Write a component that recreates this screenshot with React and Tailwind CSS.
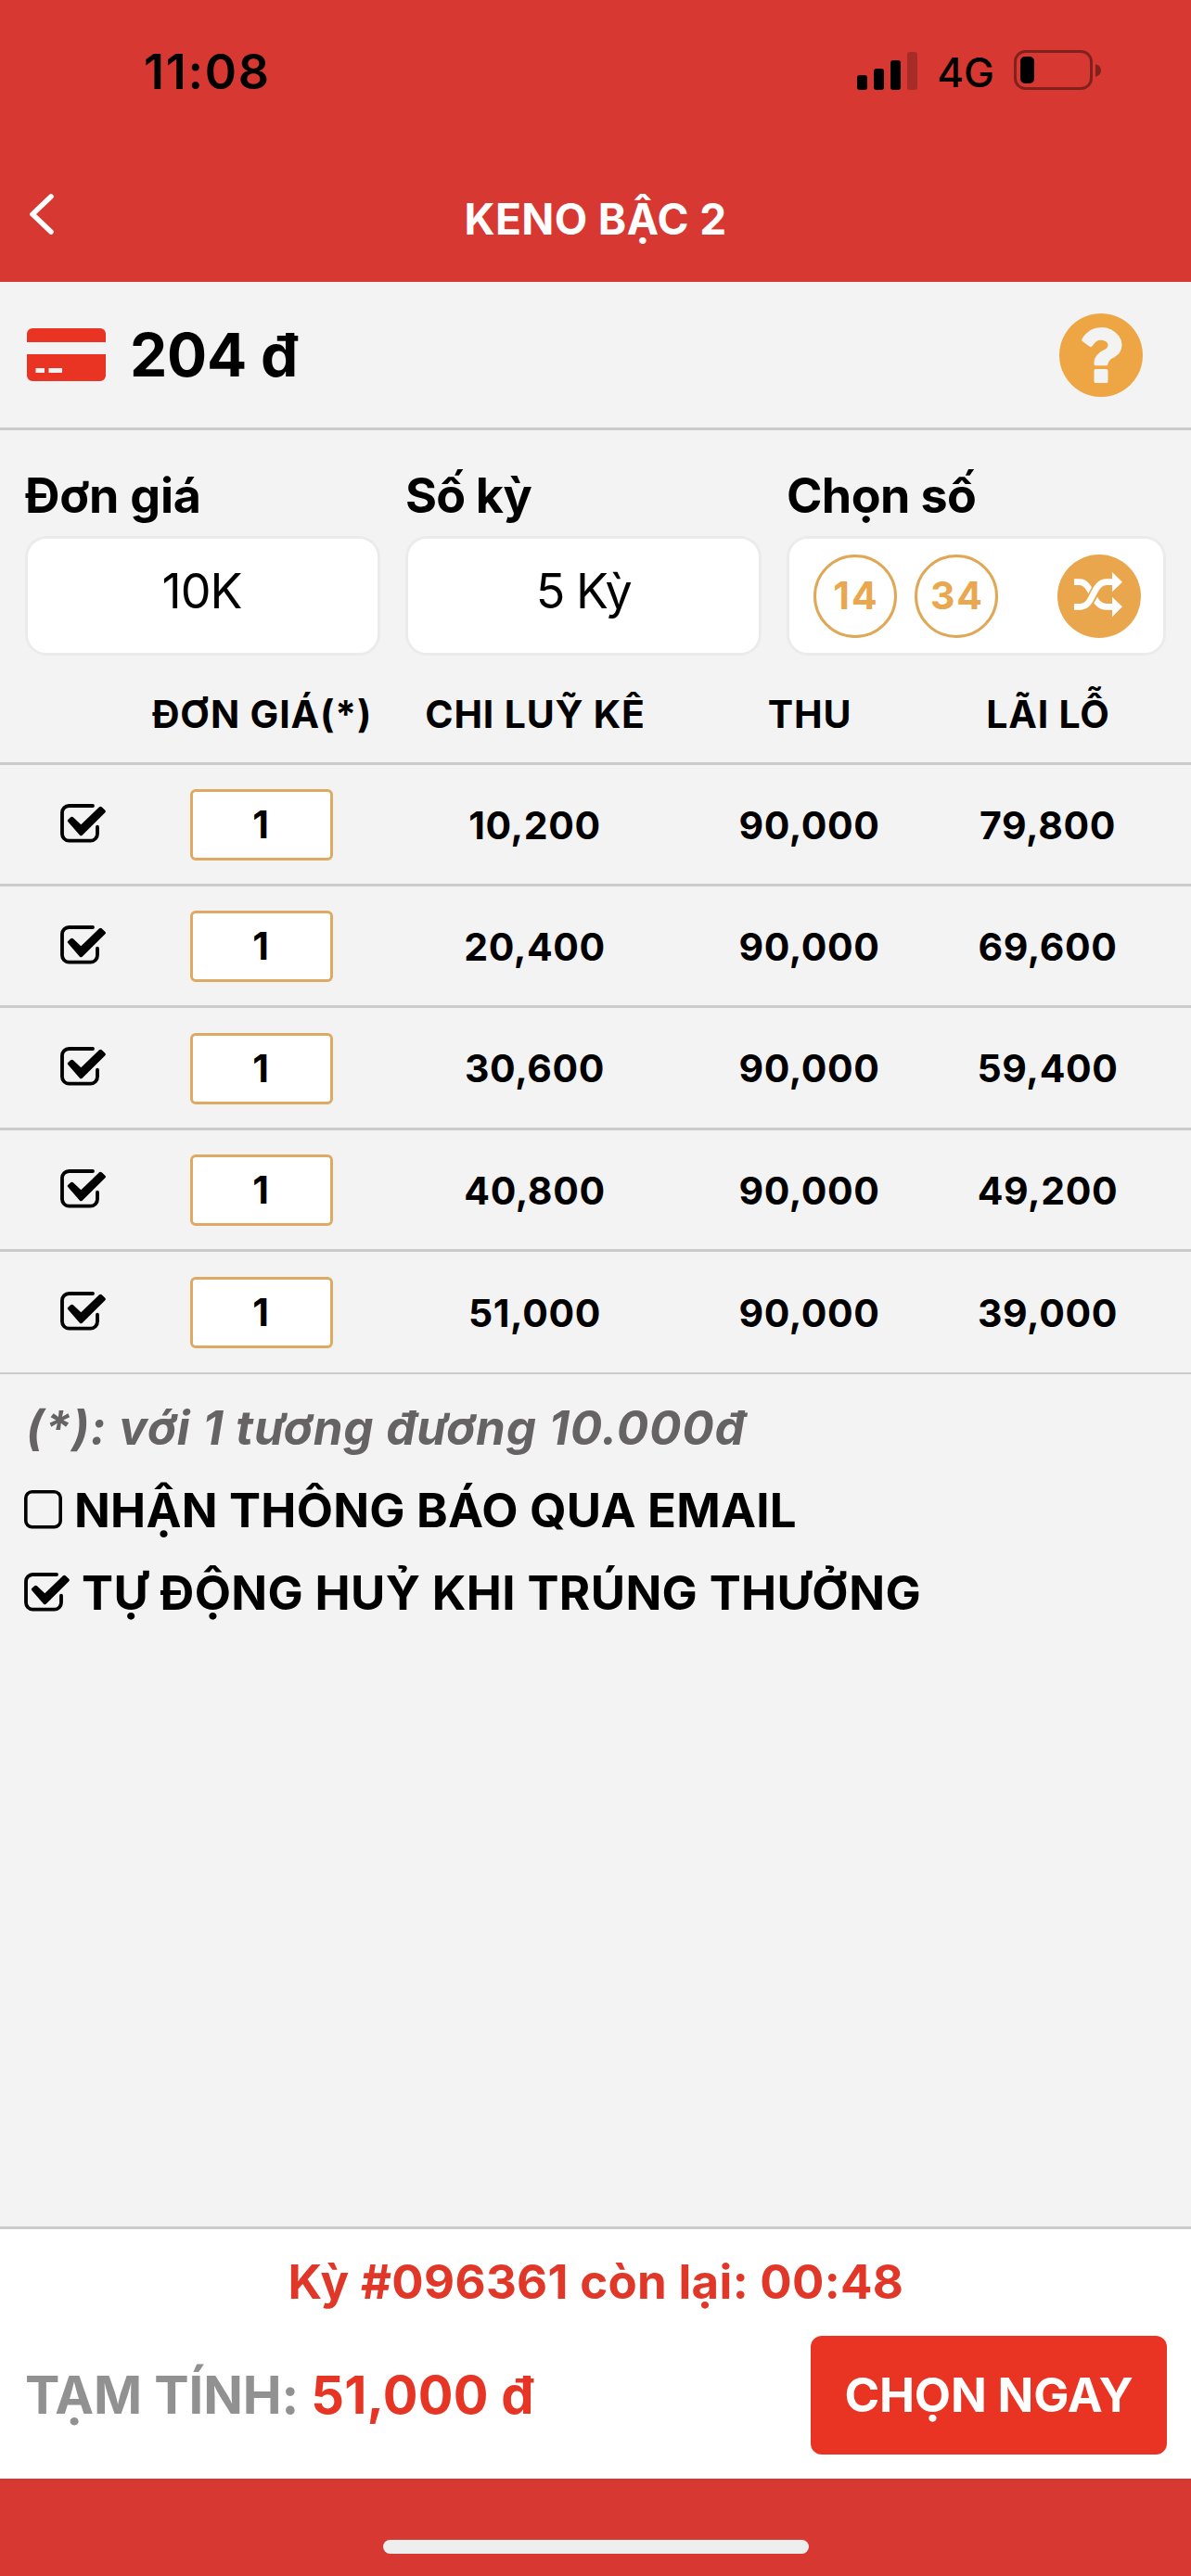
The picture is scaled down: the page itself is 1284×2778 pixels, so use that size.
import React, { useState } from 'react';

const ROWS = [
  { total: '10,200', win: '90,000', profit: '79,800', height: 'h-[131px] border-b-3' },
  { total: '20,400', win: '90,000', profit: '69,600', height: 'h-[131px] border-b-3' },
  { total: '30,600', win: '90,000', profit: '59,400', height: 'h-[132px] border-b-3' },
  { total: '40,800', win: '90,000', profit: '49,200', height: 'h-[131px] border-b-3' },
  { total: '51,000', win: '90,000', profit: '39,000', height: 'h-[132px] border-b-2' },
];

const COLS = 'grid grid-cols-[175px_213px_376px_216px_298px] items-center';

function Checkbox({ checked }) {
  if (!checked) {
    return (
      <svg width="41" height="42" viewBox="0 0 41 42" fill="none" stroke="#000" strokeWidth="3.6">
        <rect x="1.8" y="1.8" width="37.4" height="38" rx="6.8" />
      </svg>
    );
  }
  return (
    <svg width="50" height="42" viewBox="30 50 150 126" fill="none" stroke="#000">
      <path d="M135 56H58a22 22 0 0 0-22 22v69a22 22 0 0 0 22 22h70a22 22 0 0 0 22-22v-23" strokeWidth="11.5" strokeLinecap="round" />
      <path
        d="M54.5 107q-3-3 0-6l9-8q4-4 8 0L97 117l59-57q4-4 8 0l11 10q4 4 0 8l-74 73q-4 4-8 0z"
        fill="#000"
        stroke="none"
      />
    </svg>
  );
}

function StatusBar() {
  return (
    <div className="flex h-[154px] items-center justify-between pl-[155px] pr-[96px]">
      <span className="mt-px text-[52px] font-semibold tracking-[1.7px]">11:08</span>
      <div className="flex items-center">
        <svg width="66" height="42" viewBox="0 0 66 42">
          <rect x="0" y="25" width="11" height="16" rx="3" />
          <rect x="18" y="18" width="11" height="23" rx="3" />
          <rect x="36" y="9" width="11" height="32" rx="3" />
          <rect x="54" y="0" width="11" height="41" rx="3" fillOpacity="0.22" />
        </svg>
        <span className="ml-5 mt-0.5 text-[44px] font-medium leading-none">4G</span>
        <svg className="-mt-0.5 ml-[21px]" width="95" height="44" viewBox="0 0 95 44">
          <rect x="1.5" y="1.5" width="82" height="40" rx="11" fill="none" stroke="#000" strokeOpacity="0.4" strokeWidth="3" />
          <rect x="7" y="7" width="15" height="29" rx="5" />
          <path d="M88 15q6 2 6 7t-6 7z" fillOpacity="0.4" />
        </svg>
      </div>
    </div>
  );
}

function Header() {
  return (
    <header className="h-[304px] shrink-0 bg-[#d73831]">
      <StatusBar />
      <div className="grid h-[150px] grid-cols-[1fr_auto_1fr] items-center px-[31px]">
        <svg className="mt-1" width="28" height="46" viewBox="0 0 28 46" fill="none" stroke="#fff" strokeWidth="5.5" strokeLinecap="round" strokeLinejoin="round">
          <path d="M24 4L4 23l20 19" />
        </svg>
        <h1 className="mt-[13px] text-[46px] font-bold leading-none tracking-[0.4px] text-white">KENO BẬC 2</h1>
      </div>
    </header>
  );
}

function Balance() {
  return (
    <div className="flex h-[160px] items-center border-b-3 border-[#cbcbcb] pl-[29px] pr-[52px]">
      <svg width="85" height="57" viewBox="0 0 85 57" fill="#e93424">
        <path d="M6 0h73a6 6 0 0 1 6 6v9H0V6a6 6 0 0 1 6-6z" />
        <path fillRule="evenodd" d="M0 28h85v23a6 6 0 0 1-6 6H6a6 6 0 0 1-6-6zM9.500 43v5h9.500v-5zM23.500 43v5h14.500v-5z" />
      </svg>
      <span className="ml-[26px] mt-px text-[64px] font-bold leading-none tracking-[-0.2px]">204 đ</span>
      <svg className="ml-auto" width="90" height="90" viewBox="128 128 1536 1536" fill="#eda643">
        <path d="M1024 1376v-192q0-14-9-23t-23-9h-192q-14 0-23 9t-9 23v192q0 14 9 23t23 9h192q14 0 23-9t9-23zm256-672q0-88-55.500-163t-138.500-116-170-41q-243 0-371 213-15 24 8 42l132 100q7 6 19 6 16 0 25-12 53-68 86-92 34-24 86-24 48 0 85.500 26t37.500 59q0 38-20 61t-68 45q-63 28-115.500 86.500t-52.500 125.500v36q0 14 9 23t23 9h192q14 0 23-9t9-23q0-19 21.500-49.500t54.500-49.500q32-18 49-28.500t46-35 44.500-48 28-60.500 12.500-81zm384 192q0 209-103 385.500t-279.500 279.500-385.500 103-385.500-103-279.500-279.500-103-385.500 103-385.500 279.500-279.500 385.500-103 385.500 103 279.500 279.500 103 385.500z" />
      </svg>
    </div>
  );
}

function Ball({ children }) {
  return (
    <span className="flex size-[90px] items-center justify-center rounded-full border-3 border-[#e0a757] pl-[2px] text-[41px] font-bold tracking-[2px] text-[#e9a84f]">
      {children}
    </span>
  );
}

function ShuffleButton() {
  return (
    <button className="ml-auto">
      <svg width="90" height="90" viewBox="30 20 270 270" fill="none" strokeWidth="20">
        <circle cx="165" cy="155" r="135" fill="#e9a64c" />
        <path d="M84 109h18c40 0 40 80 86 80h22" stroke="#fff" />
        <path d="M84 189h18c48 0 40-80 88-80h20" stroke="#e9a64c" strokeWidth="31" />
        <path d="M84 189h21c42 0 38-80 84-80h21" stroke="#fff" />
        <path d="M207 77l33 32-33 32zM207 157l33 32-33 33z" fill="#fff" stroke="none" />
      </svg>
    </button>
  );
}

function Field({ label, labelClass, children }) {
  return (
    <div>
      <div className={`h-[114px] pt-[39px] text-[52px] font-bold leading-[63px] ${labelClass}`}>{label}</div>
      <div className="flex h-[129px] items-center justify-center rounded-[23px] border-3 border-[#ebebeb] bg-white">
        {children}
      </div>
    </div>
  );
}

function Options() {
  return (
    <div className="grid h-[247px] grid-cols-[383px_384px_409px] gap-x-[27px] pl-[27px]">
      <Field label="Đơn giá" labelClass="tracking-[-0.2px]">
        <span className="pb-[9px] pr-[2px] text-[52px] tracking-[-0.9px]">10K</span>
      </Field>
      <Field label="Số kỳ" labelClass="tracking-[-0.8px]">
        <span className="pb-[9px] text-[52px] tracking-[-1.5px]">5 Kỳ</span>
      </Field>
      <Field label="Chọn số" labelClass="tracking-[-0.6px]">
        <div className="flex w-full items-center gap-[19px] pl-[26px] pr-[24px]">
          <Ball>14</Ball>
          <Ball>34</Ball>
          <ShuffleButton />
        </div>
      </Field>
    </div>
  );
}

function BetTable() {
  return (
    <div className="whitespace-nowrap text-center text-[41px] font-bold tracking-[0.6px]">
      <div className={`${COLS} h-[114px] justify-items-center border-b-3 border-[#cbcbcb] pl-px pt-[9px] tracking-[0.8px]`}>
        <span />
        <span>ĐƠN GIÁ(*)</span>
        <span>CHI LUỸ KÊ</span>
        <span>THU</span>
        <span>LÃI LỖ</span>
      </div>
      {ROWS.map((row) => (
        <div key={row.total} className={`${COLS} ${row.height} border-[#cbcbcb]`}>
          <span className="-mt-[3px] pl-[65px]">
            <Checkbox checked />
          </span>
          <span className="mx-auto mt-px flex h-[77px] w-[154px] items-center justify-center rounded-[6px] border-3 border-[#dea962] bg-white pt-px">
            1
          </span>
          <span className="mt-[3px] pl-px">{row.total}</span>
          <span className="mt-[3px] pl-px">{row.win}</span>
          <span className="mt-[3px] pl-px">{row.profit}</span>
        </div>
      ))}
    </div>
  );
}

function Notes() {
  const [email] = useState(false);
  const [autoCancel] = useState(true);

  return (
    <div className="flex flex-col pl-[26px] pt-[14px] text-[51px] font-bold">
      <p className="flex h-[89px] items-center pl-[2px] tracking-[0.87px] italic text-[#656364]">(*): với 1 tương đương 10.000đ</p>
      <label className="flex h-[89px] items-center gap-[13px] tracking-[0.22px]">
        <span className="-mt-[4px]"><Checkbox checked={email} /></span>
        NHẬN THÔNG BÁO QUA EMAIL
      </label>
      <label className="flex h-[89px] items-center gap-[12px] tracking-[0.36px]">
        <span className="-mt-[4px]"><Checkbox checked={autoCancel} /></span>
        TỰ ĐỘNG HUỶ KHI TRÚNG THƯỞNG
      </label>
    </div>
  );
}

function Footer() {
  return (
    <footer className="mt-auto">
      <div className="h-[272px] border-t-3 border-[#cbcbcb] bg-white pl-[27px] pr-[26px]">
        <p className="flex h-[115px] items-center justify-center text-[51px] font-bold tracking-[0.3px] text-[#e13728]">
          Kỳ #096361 còn lại: 00:48
        </p>
        <div className="flex h-[128px] items-center justify-between">
          <p className="whitespace-pre text-[56px] font-bold tracking-[-0.1px] text-[#919191]">
            TẠM TÍNH: <span className="tracking-[0.2px] text-[#e63525]">51,000 đ</span>
          </p>
          <button className="h-[128px] w-[384px] rounded-[12px] bg-[#e93323] text-[51px] font-bold tracking-[-0.2px] text-white">
            CHỌN NGAY
          </button>
        </div>
      </div>
      <div className="flex h-[105px] items-end justify-center bg-[#d73831] pb-[24px]">
        <div className="h-[15px] w-[459px] rounded-full bg-[#eeeeee]" />
      </div>
    </footer>
  );
}

export default function App() {
  return (
    <div className="flex h-[2778px] w-[1284px] flex-col overflow-hidden bg-[#f3f3f3] font-['Inter',sans-serif] text-black">
      <Header />
      <Balance />
      <Options />
      <BetTable />
      <Notes />
      <Footer />
    </div>
  );
}
